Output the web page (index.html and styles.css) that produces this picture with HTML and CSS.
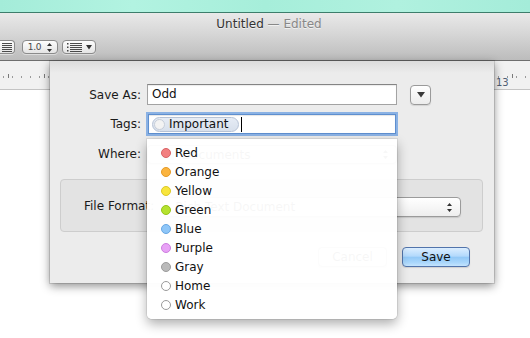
FILE: index.html
```html
<!DOCTYPE html>
<html>
<head>
<meta charset="utf-8">
<title>Untitled — Edited</title>
<link rel="stylesheet" href="styles.css">
</head>
<body>
<div class="desktop"></div>
<div class="window">
  <header class="titlebar">
    <div class="title"><span class="name">Untitled</span> <span class="edited">— Edited</span></div>
    <div class="toolbar">
      <div class="tb-btn tb-justify">
        <svg width="10" height="10" viewBox="0 0 10 10"><path d="M0 1.5h10M0 3.5h10M0 5.5h10M0 7.5h10M0 9.5h10" stroke="#4a4a4a" stroke-width="1"/></svg>
      </div>
      <div class="tb-btn tb-spacing">
        <span class="tb-text">1.0</span>
        <svg width="5" height="9" viewBox="0 0 5 9"><path d="M2.5 0L5 3H0z M2.5 9L5 6H0z" fill="#333"/></svg>
      </div>
      <div class="tb-btn tb-list">
        <svg width="15" height="10" viewBox="0 0 15 10"><path d="M0 1h1.5v1.5H0zM0 4.5h1.5V6H0zM0 8h1.5v1.5H0z" fill="#444"/><path d="M3 1.5h12M3 3.5h12M3 5.5h12M3 7.5h12M3 9.5h12" stroke="#4a4a4a" stroke-width="1"/></svg>
        <svg width="6" height="5" viewBox="0 0 6 5"><path d="M0 0h6L3 4.5z" fill="#333"/></svg>
      </div>
    </div>
  </header>

  <main class="content">
    <div class="ruler">
      <div class="ruler-ticks"></div>
      <span class="ruler-num">13</span>
    </div>
    <div class="page"></div>

    <section class="sheet">
      <div class="form">
        <label class="lbl">Save As:</label>
        <div class="field">Odd</div>
        <button class="disclosure"><svg width="8" height="6" viewBox="0 0 8 6"><path d="M0 0h8L4 5.5z" fill="#3a3a3a"/></svg></button>

        <label class="lbl">Tags:</label>
        <div class="tags-wrap">
          <div class="field tags-field">
            <span class="token"><span class="token-dot"></span>Important</span>
            <span class="caret"></span>
          </div>
          <ul class="tag-menu">
            <li class="tag"><span class="dot red"></span>Red</li>
            <li class="tag"><span class="dot orange"></span>Orange</li>
            <li class="tag"><span class="dot yellow"></span>Yellow</li>
            <li class="tag"><span class="dot green"></span>Green</li>
            <li class="tag"><span class="dot blue"></span>Blue</li>
            <li class="tag"><span class="dot purple"></span>Purple</li>
            <li class="tag"><span class="dot gray"></span>Gray</li>
            <li class="tag"><span class="dot none"></span>Home</li>
            <li class="tag"><span class="dot none"></span>Work</li>
          </ul>
        </div>
        <span></span>

        <label class="lbl">Where:</label>
        <div class="popup where">
          <svg width="14" height="11" viewBox="0 0 14 11"><path d="M0 1h5l1.5 1.5H14V11H0z" fill="#8fb6e0"/></svg>
          <span>Documents</span>
          <svg class="arrows" width="5" height="9" viewBox="0 0 5 9"><path d="M2.5 0L5 3H0z M2.5 9L5 6H0z" fill="#333"/></svg>
        </div>
        <span></span>
      </div>

      <div class="group">
        <span class="lbl">File Format:</span>
        <div class="popup format">
          <span>Rich Text Document</span>
          <svg class="arrows" width="5" height="9" viewBox="0 0 5 9"><path d="M2.5 0L5 3H0z M2.5 9L5 6H0z" fill="#333"/></svg>
        </div>
      </div>

      <div class="actions">
        <button class="btn">Cancel</button>
        <button class="btn default">Save</button>
      </div>
    </section>
  </main>
</div>
</body>
</html>
```

FILE: styles.css
```css
* { box-sizing: border-box; }
html, body { margin: 0; padding: 0; }
body {
  width: 530px;
  height: 338px;
  overflow: hidden;
  background: #fff;
  font-family: "DejaVu Sans", "Noto Sans", sans-serif;
  font-size: 12px;
  color: #111;
}

.desktop {
  height: 13px;
  background: linear-gradient(90deg, #a4ecd9 0%, #b2f3e1 25%, #a6eeda 50%, #b0f1df 75%, #a4ecd9 100%);
  border-bottom: 1px solid #3d7d6b;
}

.titlebar {
  height: 48px;
  background: linear-gradient(#e9e9e9 0%, #d6d6d6 45%, #bcbcbc 100%);
  border-bottom: 1px solid #6e6e6e;
}
.title {
  padding: 3px 0 0 8px;
  height: 27px;
  line-height: 16px;
  text-align: center;
  text-shadow: 0 1px 0 rgba(255,255,255,.6);
}
.title .name { color: #333; }
.title .edited { color: #888; }

.toolbar {
  display: flex;
  align-items: center;
  height: 14px;
}
.tb-btn {
  height: 14px;
  display: flex;
  align-items: center;
  justify-content: center;
  gap: 4px;
  border: 1px solid #8b8b8b;
  border-radius: 4px;
  background: linear-gradient(#fdfdfd, #e4e4e4);
  box-shadow: 0 1px 0 rgba(255,255,255,.45);
}
.tb-justify {
  width: 15px;
  border-left: none;
  border-radius: 0 4px 4px 0;
  padding-right: 1px;
}
.tb-spacing { width: 36px; margin-left: 7px; gap: 6px; }
.tb-text { font-size: 9px; color: #4a4a4a; letter-spacing: -0.2px; }
.tb-list { width: 34px; margin-left: 4px; gap: 4px; }

.content {
  position: relative;
  height: 277px;
}
.ruler {
  position: relative;
  height: 29px;
  background: #f1f1f1;
  border-bottom: 1px solid #c4c4c4;
  padding-top: 13px;
}
.ruler-ticks {
  height: 4px;
  background:
    repeating-linear-gradient(90deg, transparent 0 8px, #7a7a7a 8px 9px, transparent 9px 36px),
    repeating-linear-gradient(90deg, transparent 0 3px, #9a9a9a 3px 4px, transparent 4px 9px) 0 2px / 100% 2px no-repeat;
}
.ruler-num {
  position: absolute;
  left: 496px;
  top: 16px;
  font-size: 10px;
  color: #4f5f74;
}
.page { height: 248px; background: #fff; }

/* Sheet dialog */
.sheet {
  position: absolute;
  left: 50px;
  top: 0;
  width: 444px;
  height: 222px;
  padding-top: 23px;
  background: linear-gradient(#dcdcdc 0, #ececec 12px, #ececec 100%);
  box-shadow: 0 3px 9px rgba(0,0,0,.45), 0 0 0 1px rgba(0,0,0,.12);
}
.form {
  display: grid;
  grid-template-columns: 91px 250px 30px;
  grid-template-rows: 21px 22px 21px;
  column-gap: 6px;
  row-gap: 8px;
  align-items: center;
}
.lbl { text-align: right; color: #1a1a1a; white-space: nowrap; }

.field {
  height: 21px;
  background: #fff;
  border: 1px solid #a3a3a3;
  border-top-color: #848484;
  box-shadow: inset 0 1px 1px rgba(0,0,0,.08);
  padding: 0 4px;
  line-height: 19px;
}
.disclosure {
  justify-self: end;
  width: 21px;
  height: 20px;
  margin: 1px 2px 0 0;
  padding: 0;
  align-self: start;
  display: flex;
  align-items: center;
  justify-content: center;
  border: 1px solid #9a9a9a;
  border-radius: 4px;
  background: linear-gradient(#ffffff, #ececec);
  box-shadow: 0 1px 1px rgba(0,0,0,.1);
}

.tags-wrap { position: relative; height: 22px; }
.tags-field {
  margin: 1px 1px 0;
  height: 20px;
  display: flex;
  align-items: center;
  gap: 2px;
  padding: 0 3px;
  border: 1px solid #5e8fcf;
  box-shadow: 0 0 0 2px rgba(115,164,226,.8), inset 0 1px 1px rgba(0,0,0,.1);
}
.token {
  display: flex;
  align-items: center;
  gap: 4px;
  height: 15px;
  padding: 0 9px 0 1px;
  border-radius: 8px;
  background: linear-gradient(#e6ecf5, #d8e0ec);
  border: 1px solid #b7c3d6;
  line-height: 13px;
}
.token-dot {
  width: 11px;
  height: 11px;
  border-radius: 50%;
  background: #f3f3f3;
  border: 1px solid #c7ced9;
}
.caret {
  width: 1px;
  height: 15px;
  background: #000;
}

.tag-menu {
  position: absolute;
  z-index: 5;
  top: 26px;
  left: 0;
  width: 250px;
  margin: 0;
  padding: 4px 0 5px;
  list-style: none;
  background: rgba(255,255,255,.965);
  border-radius: 0 0 5px 5px;
  box-shadow: 0 5px 12px rgba(0,0,0,.32), 0 0 0 1px rgba(0,0,0,.07);
}
.tag {
  display: flex;
  align-items: center;
  gap: 4px;
  height: 19px;
  padding-left: 14px;
  color: #111;
}
.dot {
  width: 10px;
  height: 10px;
  border-radius: 50%;
  border: 1px solid;
}
.dot.red { background: #f27f80; border-color: #d86264; }
.dot.orange { background: #fbb43f; border-color: #e59a26; }
.dot.yellow { background: #f8e53c; border-color: #dcc826; }
.dot.green { background: #b5e22f; border-color: #95c41a; }
.dot.blue { background: #8ec6f8; border-color: #68a7e3; }
.dot.purple { background: #e8a2f6; border-color: #cd7ee0; }
.dot.gray { background: #bababa; border-color: #9c9c9c; }
.dot.none { background: #fff; border-color: #9a9a9a; }

.popup {
  display: flex;
  align-items: center;
  gap: 8px;
  height: 20px;
  padding: 0 8px 0 12px;
  border: 1px solid #9b9b9b;
  border-radius: 4px;
  background: linear-gradient(#ffffff, #eeeeee);
  box-shadow: 0 1px 1px rgba(0,0,0,.12);
}
.popup .arrows { margin-left: auto; }
.where { align-self: end; height: 19px; }

.group {
  margin: 15px 11px 0 10px;
  height: 53px;
  display: flex;
  align-items: center;
  gap: 8px;
  padding: 0 21px 0 23px;
  background: #e3e3e3;
  border: 1px solid #cdcdcd;
  border-radius: 4px;
}
.format { flex: 1; margin-top: 3px; }

.actions {
  margin-top: 15px;
  display: flex;
  justify-content: flex-end;
  gap: 15px;
  padding-right: 24px;
}
.btn {
  height: 20px;
  width: 69px;
  padding: 0;
  font: inherit;
  color: #111;
  border: 1px solid #9b9b9b;
  border-radius: 4px;
  background: linear-gradient(#ffffff, #ececec);
  box-shadow: 0 1px 1px rgba(0,0,0,.12);
}
.btn.default {
  width: 68px;
  border-color: #5274ab;
  background: linear-gradient(#dceeff 0%, #b3d9fc 45%, #93c9f7 52%, #a9d6fb 80%, #c4e4fd 100%);
}
```
